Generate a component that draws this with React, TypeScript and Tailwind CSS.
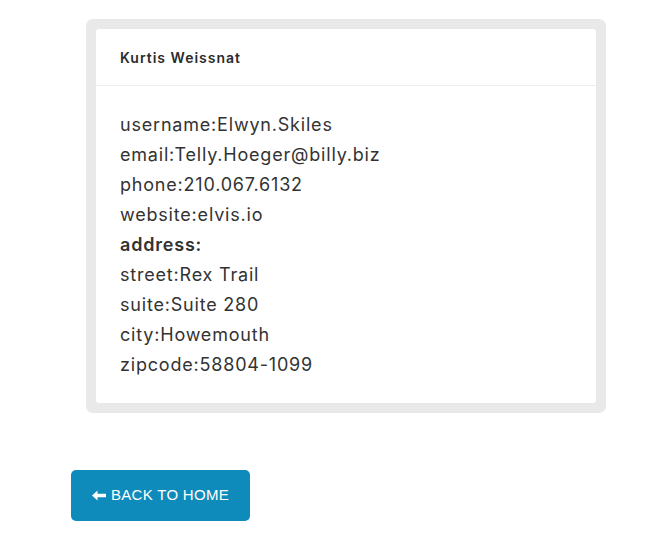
import React from "react";

export default function App() {
  const rows: [string, string][] = [
    ["username", "Elwyn.Skiles"],
    ["email", "Telly.Hoeger@billy.biz"],
    ["phone", "210.067.6132"],
    ["website", "elvis.io"],
  ];
  const addr: [string, string][] = [
    ["street", "Rex Trail"],
    ["suite", "Suite 280"],
    ["city", "Howemouth"],
    ["zipcode", "58804-1099"],
  ];
  return (
    <div className="w-[658px] h-[543px] bg-white text-[#333] flex flex-col" style={{ fontFamily: "Inter, 'Open Sans', sans-serif" }}>
      <div className="ml-[86px] mt-[19px] w-[520px] p-[10px] bg-[#e9e9e9] rounded-[7px]">
        <div className="bg-white rounded-[3px]">
          <div className="h-[57px] px-[24px] flex items-center border-b border-[#ececec] text-[14px] font-semibold text-[#2b2b2b] tracking-[1px]">
            Kurtis Weissnat
          </div>
          <div className="px-[24px] pt-[24px] pb-[23px] text-[18px] leading-[30px] tracking-[0.8px]">
            {rows.map(([k, v]) => (
              <div key={k}>{k}:{v}</div>
            ))}
            <div className="font-semibold">address:</div>
            {addr.map(([k, v]) => (
              <div key={k}>{k}:{v}</div>
            ))}
          </div>
        </div>
      </div>
      <div className="ml-[71px] mt-[57px]">
        <button className="w-[179px] h-[51px] bg-[#0f8bbb] text-white rounded-[5px] flex items-center justify-center gap-[5px] text-[15px] tracking-[0.3px]" style={{ fontFamily: "'Liberation Sans', Arial, sans-serif" }}>
          <svg width="14" height="11" viewBox="0 0 14 11" fill="white"><path d="M0 5.5 L5.5 0.5 V3.8 H14 V7.2 H5.5 V10.5 Z" /></svg>
          BACK TO HOME
        </button>
      </div>
    </div>
  );
}
